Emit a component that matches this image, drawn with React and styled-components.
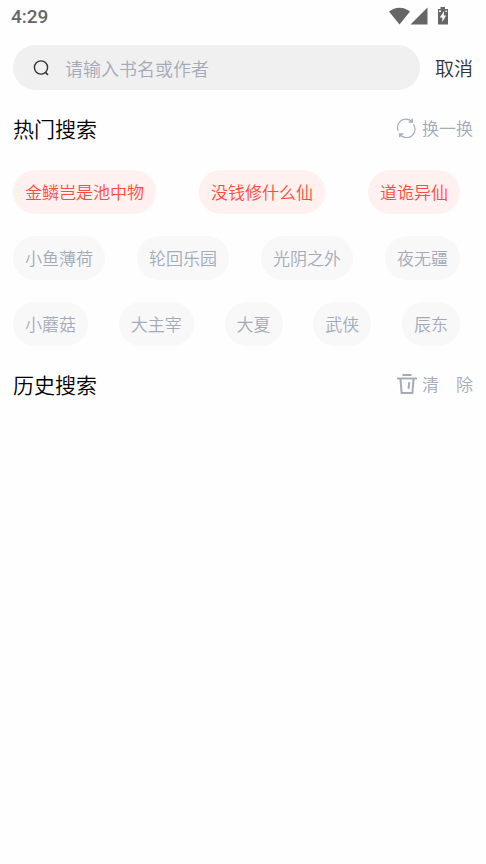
import React, { useState } from 'react';
import styled, { createGlobalStyle } from 'styled-components';

const GlobalStyle = createGlobalStyle`
*{
  box-sizing:border-box;
}
body{
  margin:0;
  background:#fefefe;
  font-family:"Noto Sans CJK SC DemiLight", "Noto Sans CJK SC", sans-serif;
  font-weight:350;
}
button, input{
  font-family:inherit;
  font-weight:inherit;
  border:none;
  background:none;
  padding:0;
  margin:0;
}
button{
  cursor:pointer;
}
`

const Page = styled.div`
min-height:100vh;
`

const StatusBar = styled.header`
display:flex;
align-items:center;
justify-content:space-between;
height:34px;
padding:0 37px 0 11px;
color:#666666;
`

const Time = styled.span`
font-family:Roboto, sans-serif;
font-size:19px;
font-weight:500;
line-height:34px;
`

const StatusIcons = styled.div`
display:flex;
align-items:center;
height:32px;
align-self:flex-start;
`

const SearchRow = styled.form`
display:flex;
align-items:center;
gap:15px;
padding:11px 13px 0;
`

const SearchBox = styled.label`
display:flex;
align-items:center;
flex:1;
min-width:0;
height:45px;
padding:0 20px;
gap:16px;
border-radius:23px;
background:#f0f0f0;
color:#333333;
svg{
  flex:none;
}
`

const SearchInput = styled.input`
flex:1;
min-width:0;
font-size:18px;
line-height:28px;
color:#333333;
outline:none;
&::placeholder{
  color:#a3abb8;
  opacity:1;
}
`

const Cancel = styled.button`
font-size:19px;
line-height:28px;
color:#333333;
`

const SectionHead = styled.div`
display:flex;
align-items:center;
justify-content:space-between;
height:32px;
margin:22px 13px 0;
`

const Title = styled.h2`
margin:0;
font-size:21px;
font-weight:inherit;
line-height:32px;
color:#000000;
`

const Action = styled.button`
display:flex;
align-items:center;
gap:5px;
font-size:17px;
line-height:24px;
color:#a3abb8;
white-space:pre;
`

const TagList = styled.div`
display:flex;
flex-direction:column;
gap:22px;
padding:26px 26px 0 13px;
`

const TagRow = styled.div`
display:flex;
justify-content:space-between;
`

const Tag = styled.button`
height:44px;
padding:0 12px;
border-radius:22px;
font-size:17px;
line-height:44px;
white-space:nowrap;
color:${props => props.$hot ? '#fd4c3c' : '#a3abb8'};
background:${props => props.$hot ? '#fff1f0' : '#f8f8f8'};
`

const WifiIcon = () => (
    <svg width="21" height="18" viewBox="0 0 21 18" fill="currentColor" aria-hidden="true">
        <path d="M0 4.6C3 2.1 6.5.7 10.500.7S18 2.100 21 4.600L10.500 17.600z" />
    </svg>
)

const SignalIcon = () => (
    <svg width="18" height="18" viewBox="0 0 18 18" fill="currentColor" aria-hidden="true">
        <path d="M17.500.5V17.500H.5z" />
    </svg>
)

const BatteryIcon = styled.svg`
margin-left:9px;
`

const SearchIcon = () => (
    <svg width="16" height="16" viewBox="0 0 16 16" fill="none" stroke="currentColor" strokeWidth="1.4" aria-hidden="true">
        <circle cx="8" cy="7.500" r="6.600" />
        <path d="M12.300 12.200L15 14.900" strokeWidth="1.600" />
    </svg>
)

const RefreshIcon = () => (
    <svg width="20" height="20" viewBox="0 0 20 20" fill="none" stroke="currentColor" strokeWidth="1.200" aria-hidden="true">
        <path d="M1.200 12.800A8.300 8.300 0 0 1 14.800 3.700" />
        <path d="M16.400 6.400A8.300 8.300 0 0 1 3 16.300" />
        <path d="M15.200.8V4H11.800" strokeWidth="1.500" />
        <path d="M2.800 19.200V16H6.200" strokeWidth="1.500" />
    </svg>
)

const TrashIcon = () => (
    <svg width="20" height="20" viewBox="0 0 20 20" fill="none" stroke="currentColor" aria-hidden="true">
        <path d="M5.500 1H14.500" strokeWidth="2" />
        <path d="M0 4.500H20" strokeWidth="1.900" />
        <path d="M3.400 4.500L4.600 19H15.400L16.600 4.500" strokeWidth="2" />
        <path d="M12.300 8.200L11.500 14.800" strokeWidth="2" />
    </svg>
)

const hotRows = [
    ['金鳞岂是池中物', '没钱修什么仙', '道诡异仙'],
    ['小鱼薄荷', '轮回乐园', '光阴之外', '夜无疆'],
    ['小蘑菇', '大主宰', '大夏', '武侠', '辰东'],
]

function App() {
    const [keyword, setKeyword] = useState('');

    return (
        <Page>
            <GlobalStyle />
            <StatusBar>
                <Time>4:29</Time>
                <StatusIcons>
                    <WifiIcon />
                    <SignalIcon />
                    <BatteryIcon width="12" height="18" viewBox="0 0 12 18" aria-hidden="true">
                        <path d="M3.500 0H8V2H11V17.500H1V2H3.500z" fill="#666666" />
                        <path d="M7 4L2.800 10.500H5.300V15L9.200 8.500H7z" fill="#fefefe" />
                        <path d="M2 3.500H4V5H2zM8.500 3.500H10V5H8.500z" fill="#fefefe" />
                    </BatteryIcon>
                </StatusIcons>
            </StatusBar>

            <SearchRow onSubmit={e => e.preventDefault()}>
                <SearchBox>
                    <SearchIcon />
                    <SearchInput
                        type="text"
                        aria-label="搜索"
                        placeholder="请输入书名或作者"
                        value={keyword}
                        onChange={e => setKeyword(e.target.value)}
                    />
                </SearchBox>
                <Cancel type="button" onClick={() => setKeyword('')}>取消</Cancel>
            </SearchRow>

            <SectionHead>
                <Title>热门搜索</Title>
                <Action type="button"><RefreshIcon />换一换</Action>
            </SectionHead>
            <TagList>
                {hotRows.map((row, i) => (
                    <TagRow key={i}>
                        {row.map(name => (
                            <Tag key={name} type="button" $hot={i === 0} onClick={() => setKeyword(name)}>{name}</Tag>
                        ))}
                    </TagRow>
                ))}
            </TagList>

            <SectionHead>
                <Title>历史搜索</Title>
                <Action type="button"><TrashIcon />清　除</Action>
            </SectionHead>
        </Page>
    );
}

export default App;
